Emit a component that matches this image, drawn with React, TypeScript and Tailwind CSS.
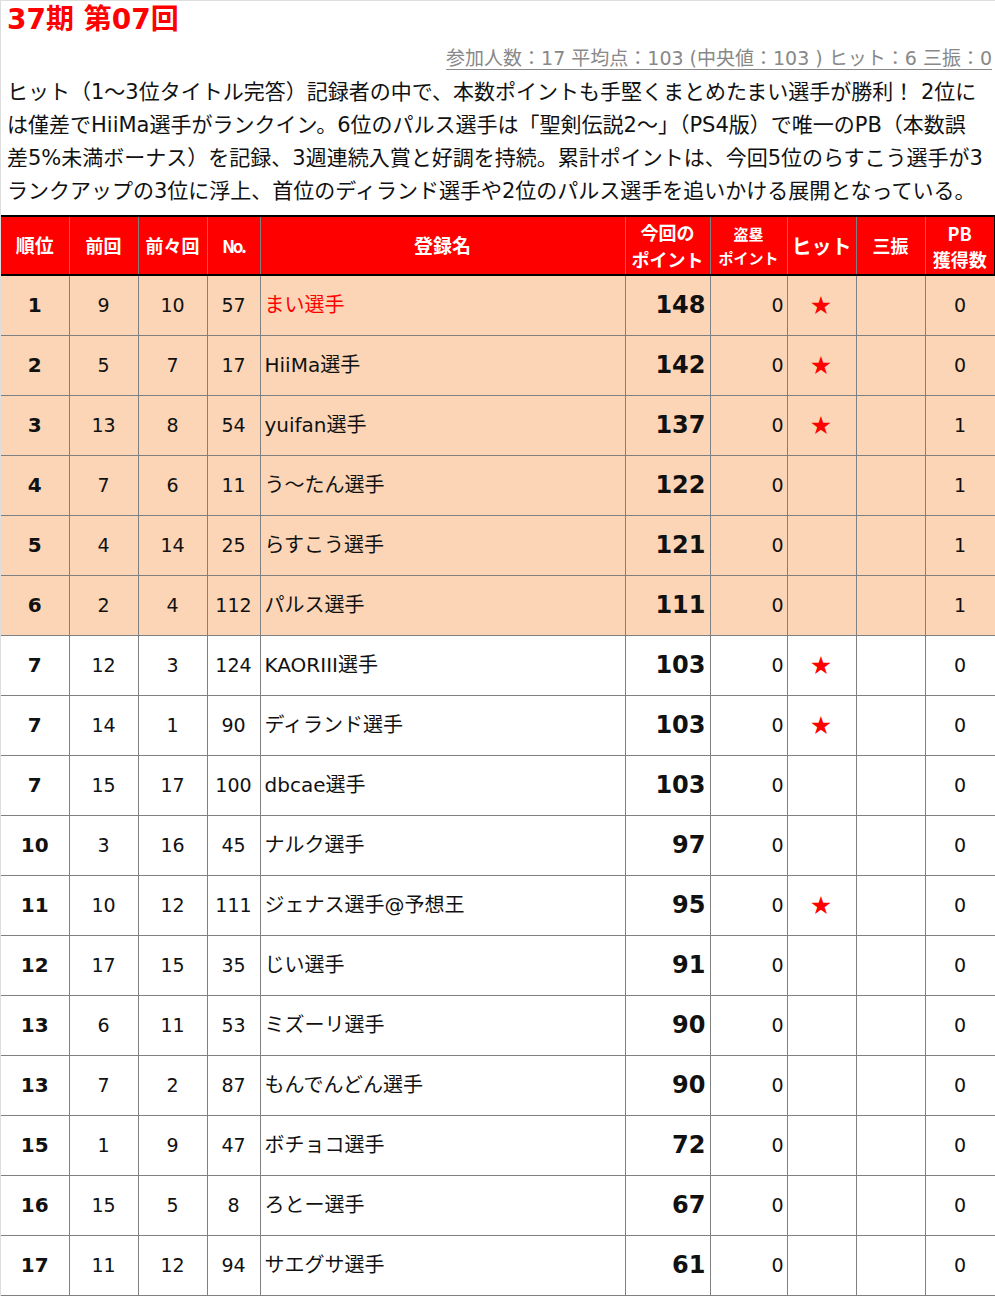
import React from "react";

type Row = {
  rank: string;
  prev: string;
  prev2: string;
  no: string;
  name: string;
  pts: string;
  hit: boolean;
  pb: string;
  hl: boolean;
  red?: boolean;
};

const rows: Row[] = [
  { rank: "1", prev: "9", prev2: "10", no: "57", name: "まい選手", pts: "148", hit: true, pb: "0", hl: true, red: true },
  { rank: "2", prev: "5", prev2: "7", no: "17", name: "HiiMa選手", pts: "142", hit: true, pb: "0", hl: true },
  { rank: "3", prev: "13", prev2: "8", no: "54", name: "yuifan選手", pts: "137", hit: true, pb: "1", hl: true },
  { rank: "4", prev: "7", prev2: "6", no: "11", name: "う～たん選手", pts: "122", hit: false, pb: "1", hl: true },
  { rank: "5", prev: "4", prev2: "14", no: "25", name: "らすこう選手", pts: "121", hit: false, pb: "1", hl: true },
  { rank: "6", prev: "2", prev2: "4", no: "112", name: "パルス選手", pts: "111", hit: false, pb: "1", hl: true },
  { rank: "7", prev: "12", prev2: "3", no: "124", name: "KAORIII選手", pts: "103", hit: true, pb: "0", hl: false },
  { rank: "7", prev: "14", prev2: "1", no: "90", name: "ディランド選手", pts: "103", hit: true, pb: "0", hl: false },
  { rank: "7", prev: "15", prev2: "17", no: "100", name: "dbcae選手", pts: "103", hit: false, pb: "0", hl: false },
  { rank: "10", prev: "3", prev2: "16", no: "45", name: "ナルク選手", pts: "97", hit: false, pb: "0", hl: false },
  { rank: "11", prev: "10", prev2: "12", no: "111", name: "ジェナス選手@予想王", pts: "95", hit: true, pb: "0", hl: false },
  { rank: "12", prev: "17", prev2: "15", no: "35", name: "じい選手", pts: "91", hit: false, pb: "0", hl: false },
  { rank: "13", prev: "6", prev2: "11", no: "53", name: "ミズーリ選手", pts: "90", hit: false, pb: "0", hl: false },
  { rank: "13", prev: "7", prev2: "2", no: "87", name: "もんでんどん選手", pts: "90", hit: false, pb: "0", hl: false },
  { rank: "15", prev: "1", prev2: "9", no: "47", name: "ボチョコ選手", pts: "72", hit: false, pb: "0", hl: false },
  { rank: "16", prev: "15", prev2: "5", no: "8", name: "ろとー選手", pts: "67", hit: false, pb: "0", hl: false },
  { rank: "17", prev: "11", prev2: "12", no: "94", name: "サエグサ選手", pts: "61", hit: false, pb: "0", hl: false },
];

const mixed = { fontFamily: '"DejaVu Sans", "Noto Sans CJK JP", sans-serif' };

export default function App() {
  const td = "border border-[#808080] h-[60px] p-0 align-middle";
  const th = "border-x border-[#808080] p-0 align-middle text-white font-bold";
  return (
    <div
      className="w-[995px] bg-white border-t border-l border-[#dddddd] text-[#111]"
      style={{ fontFamily: '"Noto Sans CJK JP", "DejaVu Sans", sans-serif' }}
    >
      <h1
        className="text-[28px] leading-[36px] font-bold text-[#ff0000] pl-[6px] pt-[1px]"
        style={mixed}
      >
        37期 第07回
      </h1>
      <div
        className="text-right pr-[3px] mt-[3px] text-[19px] leading-[34px] text-[#888888] underline underline-offset-[4px]"
        style={mixed}
      >
        参加人数：17 平均点：103 (中央値：103 ) ヒット：6 三振：0
      </div>
      <div
        className="pl-[6px] text-[21px] leading-[33px] text-[#111] whitespace-nowrap mt-[1px]"
        style={mixed}
      >
        <div>ヒット（1～3位タイトル完答）記録者の中で、本数ポイントも手堅くまとめたまい選手が勝利！ 2位に</div>
        <div>は僅差でHiiMa選手がランクイン。6位のパルス選手は「聖剣伝説2～」（PS4版）で唯一のPB（本数誤</div>
        <div>差5%未満ボーナス）を記録、3週連続入賞と好調を持続。累計ポイントは、今回5位のらすこう選手が3</div>
        <div>ランクアップの3位に浮上、首位のディランド選手や2位のパルス選手を追いかける展開となっている。</div>
      </div>
      <table className="mt-[7px] table-fixed border-collapse w-[994px]" style={mixed}>
        <colgroup>
          <col className="w-[68px]" />
          <col className="w-[69px]" />
          <col className="w-[69px]" />
          <col className="w-[53px]" />
          <col className="w-[365px]" />
          <col className="w-[85px]" />
          <col className="w-[77px]" />
          <col className="w-[69px]" />
          <col className="w-[69px]" />
          <col className="w-[70px]" />
        </colgroup>
        <thead>
          <tr
            className="bg-[#ff0000] h-[59px] border-t-[2px] border-b-[2px] border-black"
            style={{ fontFamily: '"Noto Sans CJK JP", sans-serif' }}
          >
            <th className={`${th} text-[19px] border-l-0`}>順位</th>
            <th className={`${th} text-[18px]`}>前回</th>
            <th className={`${th} text-[18px]`}>前々回</th>
            <th className={`${th} text-[17px] tracking-[-2px]`}>No.</th>
            <th className={`${th} text-[19px]`}>登録名</th>
            <th className={`${th} text-[18px] leading-[27px]`}>
              今回の
              <br />
              ポイント
            </th>
            <th className={`${th} text-[15px] leading-[24px]`}>
              盗塁
              <br />
              ポイント
            </th>
            <th className={`${th} text-[20px]`}>ヒット</th>
            <th className={`${th} text-[18px]`}>三振</th>
            <th className={`${th} text-[18px] leading-[26px] border-r-[2px] border-r-black`}>
              PB
              <br />
              獲得数
            </th>
          </tr>
        </thead>
        <tbody>
          {rows.map((r, i) => (
            <tr key={i} className={r.hl ? "bg-[#fbd5b5]" : "bg-white"}>
              <td className={`${td} text-center font-bold text-[20px] border-l-0`}>{r.rank}</td>
              <td className={`${td} text-center text-[19px]`}>{r.prev}</td>
              <td className={`${td} text-center text-[19px]`}>{r.prev2}</td>
              <td className={`${td} text-center text-[19px]`}>{r.no}</td>
              <td className={`${td} text-left pl-[4px] text-[20px] ${r.red ? "text-[#ff0000]" : ""}`}>
                {r.name}
              </td>
              <td className={`${td} text-right pr-[4px] font-bold text-[24px]`}>{r.pts}</td>
              <td className={`${td} text-right pr-[3px] text-[19px]`}>0</td>
              <td className={`${td} text-center text-[25px] leading-none text-[#ff0000] pr-[1px]`}>{r.hit ? "★" : ""}</td>
              <td className={`${td}`}></td>
              <td className={`${td} text-center text-[19px]`}>{r.pb}</td>
            </tr>
          ))}
        </tbody>
      </table>
    </div>
  );
}
